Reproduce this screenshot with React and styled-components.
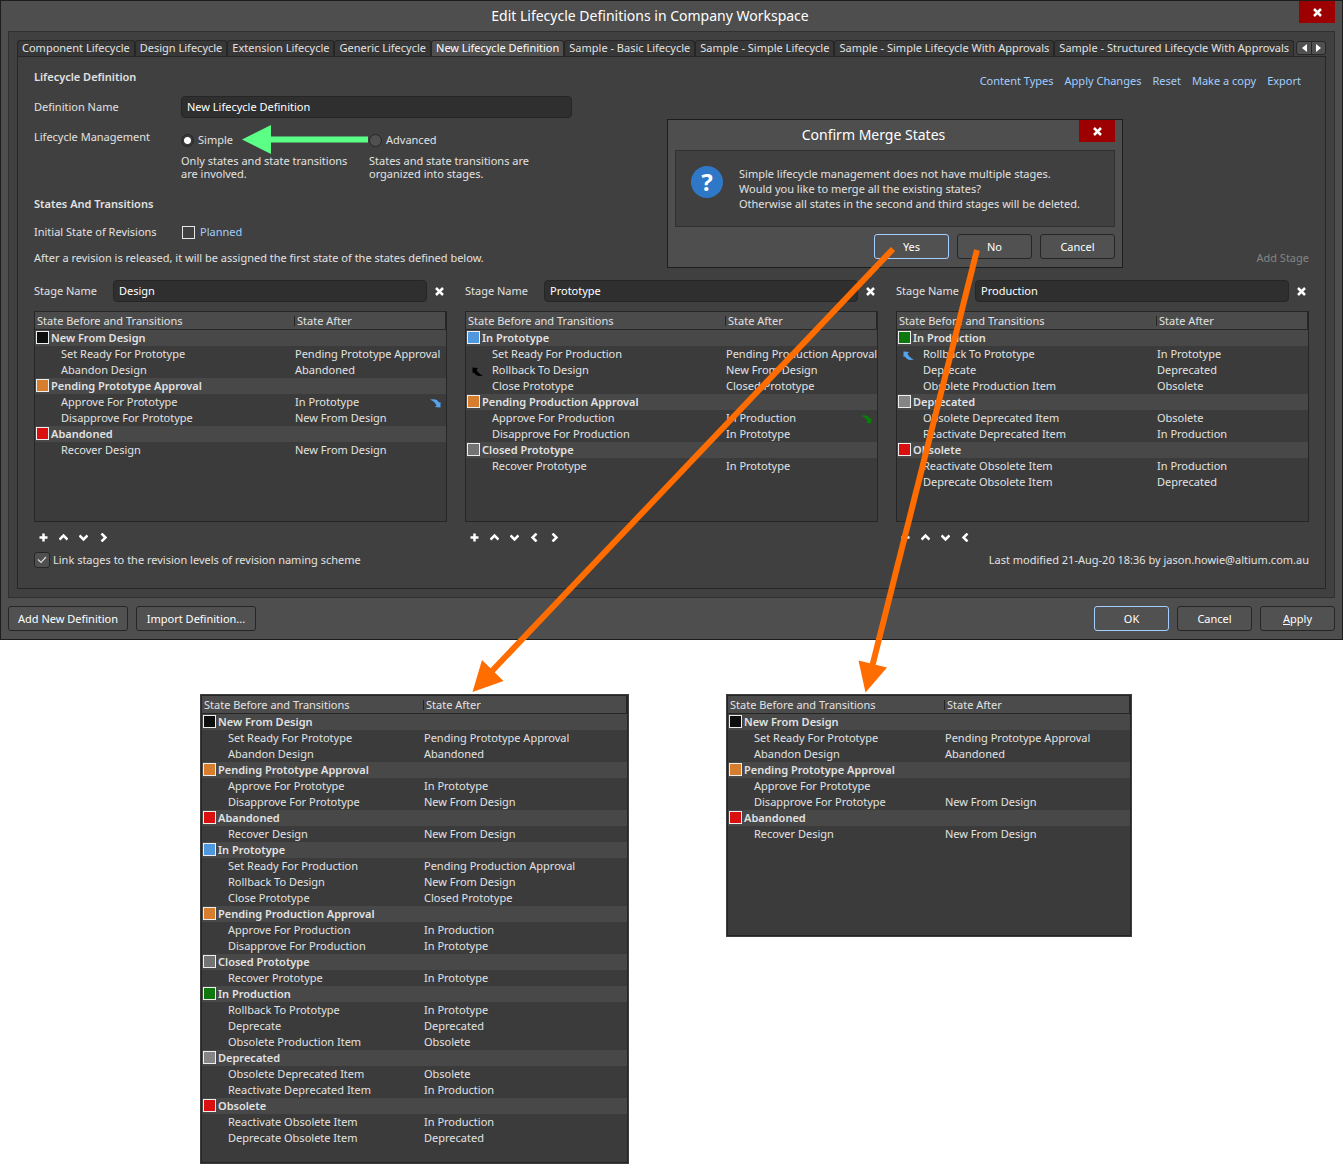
import React from "react";
import styled, { createGlobalStyle } from "styled-components";

const colors = {
  frame: "#1d1d1d",
  chrome: "#4e4e4e",
  panel: "#404040",
  line: "#262626",
  field: "#2f2f2f",
  list: "#3b3b3b",
  group: "#484848",
  text: "#e2e2e2",
  bright: "#ffffff",
  link: "#a3ceff",
  dim: "#848484",
  accent: "#ff6c00",
};

const swatches = {
  black: "#0d0f0e",
  orange: "#d67e2e",
  red: "#da0f10",
  blue: "#4f98e0",
  closed: "#737373",
  green: "#0e780e",
  gray: "#858585",
};

const GlobalStyle = createGlobalStyle`
  * {
    box-sizing: border-box;
  }
  body {
    margin: 0;
    background: #ffffff;
    color: ${colors.text};
    font: 11px/16px "Noto Sans", "Open Sans", sans-serif;
  }
  button, input {
    font: inherit;
    color: inherit;
    margin: 0;
  }
`;

const Page = styled.div`
  position: relative;
`;

const Window = styled.main`
  display: flex;
  flex-direction: column;
  padding: 0 7px 8px;
  border: 1px solid ${colors.frame};
  background: ${colors.chrome};
`;

const TitleBar = styled.header`
  display: grid;
  grid-template-columns: 1fr 36px;
  height: 30px;
  margin-left: -7px;
`;

const WindowTitle = styled.h1`
  margin: 0;
  font-size: 14px;
  line-height: 30px;
  font-weight: 400;
  text-align: center;
  color: ${colors.bright};
`;

const CloseButton = styled.button`
  display: grid;
  place-items: center;
  height: 22px;
  padding: 0;
  border: 0;
  background: #9c0000;
  color: ${colors.bright};
`;

const Panel = styled.div`
  padding: 8px;
  border: 1px solid #303030;
  background: ${colors.panel};
`;

const TabBar = styled.div`
  display: flex;
  height: 16px;
`;

const Tab = styled.button`
  flex: 1 1 auto;
  padding: 0 0 2px;
  border: 1px solid ${colors.line};
  border-bottom: 0;
  border-radius: 3px 3px 0 0;
  background: ${(props) => (props.$active ? "#505050" : "#373737")};
  color: ${(props) => (props.$active ? colors.bright : colors.text)};
  line-height: 13px;
  white-space: nowrap;
`;

const TabScroller = styled.div`
  display: flex;
  flex: none;
  margin: 1px 0 1px 2px;
  border: 1px solid ${colors.line};
  border-radius: 3px;
  background: #505050;
`;

const ScrollButton = styled.button`
  display: grid;
  place-items: center;
  width: 14px;
  padding: 0;
  border: 0;
  background: none;
  color: ${colors.bright};

  & + & {
    border-left: 1px solid ${colors.line};
  }
`;

const TabBody = styled.div`
  padding: 12px 16px 20px;
  border: 1px solid ${colors.line};
`;

const Section = styled.div`
  display: flex;
  justify-content: space-between;
`;

const Heading = styled.h2`
  margin: 0;
  font-size: 11px;
  font-weight: 600;
  line-height: 16px;
`;

const Actions = styled.nav`
  display: flex;
  gap: 11px;
  padding: 4px 8px 0 0;
`;

const ActionLink = styled.a`
  color: ${colors.link};
  text-decoration: none;
`;

const FormRow = styled.div`
  display: grid;
  grid-template-columns: 147px 1fr;
  align-items: ${(props) => (props.$top ? "start" : "center")};
`;

const Definition = styled.div`
  display: grid;
  gap: 11px;
  margin: 7px 0 16px;
`;

const Field = styled.input`
  width: 100%;
  max-width: ${(props) => props.$max || "none"};
  height: 22px;
  padding: 0 5px 2px;
  border: 1px solid ${colors.line};
  border-radius: 4px;
  background: ${colors.field};
  color: ${colors.bright};
`;

const Choices = styled.div`
  display: flex;
  gap: 10px;
  padding-top: 3px;
`;

const Choice = styled.div`
  width: 178px;
`;

const ChoiceLabel = styled.label`
  display: flex;
  align-items: center;
  gap: 4px;
`;

const Radio = styled.input`
  appearance: none;
  width: 13px;
  height: 13px;
  border: 1px solid ${colors.line};
  border-radius: 50%;
  background: #505050;

  &:checked {
    background: radial-gradient(circle, #fff 3px, #383838 4px);
  }
`;

const Hint = styled.p`
  margin: 6px 0 0;
  line-height: 13px;
`;

const Box = styled.input`
  appearance: none;
  width: 13px;
  height: 13px;
  border: 1px solid #e6e6e6;
  margin-left: 1px;
`;

const StateRow = styled(FormRow)`
  margin: 12px 0 10px;
`;

const PlannedLabel = styled.label`
  display: flex;
  align-items: center;
  gap: 5px;
  color: ${colors.link};
`;

const AddStage = styled.button`
  padding: 0;
  border: 0;
  background: none;

  &:disabled {
    color: ${colors.dim};
  }
`;

const Stages = styled.div`
  display: grid;
  grid-template-columns: repeat(3, 1fr);
  gap: 18px;
  margin-top: 14px;
`;

const StageName = styled.div`
  display: grid;
  grid-template-columns: 79px 1fr 20px;
  align-items: center;
  margin-bottom: 9px;
`;

const IconButton = styled.button`
  display: grid;
  place-items: center;
  width: 20px;
  height: 16px;
  padding: 0;
  border: 0;
  background: none;
  color: ${colors.bright};
`;

const RemoveButton = styled(IconButton)`
  justify-self: end;
  width: 15px;
`;

const StageTools = styled.div`
  display: flex;
  margin-top: 7px;
  /* the plus glyph lines up with the colour swatches above */
  margin-left: -1px;
`;

const ListFrame = styled.div`
  height: ${(props) => props.$height};
  overflow: hidden;
  border: 1px solid ${colors.line};
  background: ${colors.list};
`;

const List = styled.table`
  width: 100%;
  table-layout: fixed;
  border-collapse: separate;
  border-spacing: 0;
  white-space: nowrap;
`;

const HeadCell = styled.th`
  position: relative;
  width: ${(props) => props.$width || "auto"};
  height: 18px;
  padding: 0 2px;
  border-bottom: 1px solid ${colors.line};
  background: #4b4b4b;
  font-weight: 400;
  text-align: left;

  &:last-child {
    padding-left: 3px;
    border-right: 1px solid ${colors.line};
  }

  &:last-child::before {
    content: "";
    position: absolute;
    top: 4px;
    left: 0;
    height: 10px;
    border-left: 1px solid ${colors.line};
  }
`;

const GroupCell = styled.td`
  height: 16px;
  padding: 0 1px;
  background: ${colors.group};
  font-weight: 600;
`;

const GroupName = styled.span`
  display: flex;
  gap: 2px;
`;

const Swatch = styled.span`
  width: 13px;
  height: 13px;
  margin-top: 1px;
  border: 1px solid #eee;
  background: ${(props) => props.$color};
`;

const Cell = styled.td`
  position: relative;
  height: 16px;
  padding: 0 0 0 ${(props) => (props.$indent ? "26px" : "1px")};
`;

const Marker = styled.svg`
  position: absolute;
  top: 5px;
  ${(props) => (props.$back ? "left: 6px; transform: rotate(180deg);" : "right: 5px;")}
`;

const StatusRow = styled.div`
  display: flex;
  justify-content: space-between;
  margin-top: 7px;
`;

const LinkLabel = styled.label`
  display: flex;
  align-items: center;
  gap: 3px;
`;

const CheckWrap = styled.span`
  display: grid;
  width: 16px;
  height: 16px;

  & > * {
    grid-area: 1 / 1;
    place-self: center;
    pointer-events: none;
  }
`;

const LinkCheck = styled.input`
  appearance: none;
  width: 16px;
  height: 16px;
  border: 1px solid ${colors.line};
  border-radius: 3px;
  background: #505050;
`;

const Footer = styled.footer`
  display: flex;
  gap: 8px;
  margin-top: 8px;
`;

const PushButton = styled.button`
  width: ${(props) => (props.$wide ? "120px" : "75px")};
  height: 25px;
  padding: 0;
  border: 1px solid ${(props) => (props.$primary ? colors.link : colors.line)};
  border-radius: 3px;
  background: #515151;
  color: ${colors.bright};
`;

const Spacer = styled.span`
  flex: 1;
`;

const Dialog = styled.section`
  position: absolute;
  top: 119px;
  left: 667px;
  width: 456px;
  padding: 0 7px 8px;
  border: 1px solid ${colors.frame};
  background: ${colors.chrome};
`;

const Message = styled.div`
  display: flex;
  gap: 16px;
  padding: 15px;
  border: 1px solid #303030;
  background: ${colors.panel};
`;

const MessageText = styled.p`
  margin: 0;
  line-height: 15px;
`;

const QuestionMark = styled.span`
  width: 32px;
  height: 32px;
  border-radius: 50%;
  background: #2f78c8;
  color: ${colors.bright};
  font-size: 24px;
  font-weight: 700;
  line-height: 32px;
  text-align: center;
`;

const DialogButtons = styled.div`
  display: flex;
  justify-content: flex-end;
  gap: 8px;
  margin-top: 7px;
`;

const Results = styled.div`
  display: flex;
  align-items: flex-start;
  gap: 97px;
  padding: 54px 0 0 200px;
`;

const Result = styled.div`
  width: ${(props) => props.$width};
  border: 1px solid #3e3e3e;
`;

const Callouts = styled.svg`
  position: absolute;
  top: 0;
  left: 0;
  pointer-events: none;
`;

const tabs = [
  "Component Lifecycle",
  "Design Lifecycle",
  "Extension Lifecycle",
  "Generic Lifecycle",
  "New Lifecycle Definition",
  "Sample - Basic Lifecycle",
  "Sample - Simple Lifecycle",
  "Sample - Simple Lifecycle With Approvals",
  "Sample - Structured Lifecycle With Approvals",
];

const actions = ["Content Types", "Apply Changes", "Reset", "Make a copy", "Export"];

const design = [
  { name: "New From Design", color: "black", rows: [
    ["Set Ready For Prototype", "Pending Prototype Approval"],
    ["Abandon Design", "Abandoned"],
  ] },
  { name: "Pending Prototype Approval", color: "orange", rows: [
    ["Approve For Prototype", "In Prototype", { next: "#55a4f2" }],
    ["Disapprove For Prototype", "New From Design"],
  ] },
  { name: "Abandoned", color: "red", rows: [
    ["Recover Design", "New From Design"],
  ] },
];

const prototype = [
  { name: "In Prototype", color: "blue", rows: [
    ["Set Ready For Production", "Pending Production Approval"],
    ["Rollback To Design", "New From Design", { back: "#000000" }],
    ["Close Prototype", "Closed Prototype"],
  ] },
  { name: "Pending Production Approval", color: "orange", rows: [
    ["Approve For Production", "In Production", { next: "#0b7d0b" }],
    ["Disapprove For Production", "In Prototype"],
  ] },
  { name: "Closed Prototype", color: "closed", rows: [
    ["Recover Prototype", "In Prototype"],
  ] },
];

const production = [
  { name: "In Production", color: "green", rows: [
    ["Rollback To Prototype", "In Prototype", { back: "#55a4f2" }],
    ["Deprecate", "Deprecated"],
    ["Obsolete Production Item", "Obsolete"],
  ] },
  { name: "Deprecated", color: "gray", rows: [
    ["Obsolete Deprecated Item", "Obsolete"],
    ["Reactivate Deprecated Item", "In Production"],
  ] },
  { name: "Obsolete", color: "red", rows: [
    ["Reactivate Obsolete Item", "In Production"],
    ["Deprecate Obsolete Item", "Deprecated"],
  ] },
];

const stages = [
  { name: "Design", groups: design, tools: ["plus", "up", "down", "right"] },
  { name: "Prototype", groups: prototype, tools: ["plus", "up", "down", "left", "right"] },
  { name: "Production", groups: production, tools: ["plus", "up", "down", "left"] },
];

// Merging keeps every state, declining drops the links to the removed stages.
const merged = [...design, ...prototype, ...production];
const trimmed = design.map((group) => ({
  ...group,
  rows: group.rows.map(([name, after]) => [name, after === "In Prototype" ? "" : after]),
}));

const iconPaths = {
  close: "M1 1l7 7M8 1l-7 7",
  plus: "M4.5 0.5v8M0.5 4.5h8",
  up: "M0.5 6.5l4-4 4 4",
  down: "M0.5 2.5l4 4 4-4",
  left: "M6.5 0.5l-4 4 4 4",
  right: "M2.5 0.5l4 4-4 4",
};

const Icon = ({ name }) => (
  <svg width="9" height="9" viewBox="0 0 9 9" fill="none" stroke="currentColor" strokeWidth="2.5">
    <path d={iconPaths[name]} />
  </svg>
);

const TransitionArrow = ({ color, back }) => (
  <Marker $back={back} width="11" height="9" viewBox="0 0 11 9" fill={color}>
    <path d="M0 0.500Q7-1 9 3.500L10.500 3V8.500L5 8L6.500 6.500Q5 2.500 0 0.500z" />
  </Marker>
);

const StateList = ({ groups, split, height, markers }) => (
  <ListFrame $height={height}>
    <List>
      <thead>
        <tr>
          <HeadCell $width={split}>State Before and Transitions</HeadCell>
          <HeadCell>State After</HeadCell>
        </tr>
      </thead>
      <tbody>
        {groups.map((group) => (
          <React.Fragment key={group.name}>
            <tr>
              <GroupCell colSpan={2}>
                <GroupName>
                  <Swatch $color={swatches[group.color]} />
                  {group.name}
                </GroupName>
              </GroupCell>
            </tr>
            {group.rows.map(([name, after, marker = {}]) => (
              <tr key={name}>
                <Cell $indent>
                  {markers && marker.back && <TransitionArrow back color={marker.back} />}
                  {name}
                </Cell>
                <Cell>
                  {after}
                  {markers && marker.next && <TransitionArrow color={marker.next} />}
                </Cell>
              </tr>
            ))}
          </React.Fragment>
        ))}
      </tbody>
    </List>
  </ListFrame>
);

const Stage = ({ name, groups, tools }) => {
  const id = `stage-${name.toLowerCase()}`;
  return (
    <section>
      <StageName>
        <label htmlFor={id}>Stage Name</label>
        <Field id={id} defaultValue={name} />
        <RemoveButton aria-label={`Remove ${name}`}>
          <Icon name="close" />
        </RemoveButton>
      </StageName>
      <StateList groups={groups} split="259px" height="211px" markers />
      <StageTools>
        {tools.map((tool) => (
          <IconButton key={tool} aria-label={tool}>
            <Icon name={tool} />
          </IconButton>
        ))}
      </StageTools>
    </section>
  );
};

const ConfirmDialog = () => (
  <Dialog role="dialog" aria-labelledby="confirm-title">
    <TitleBar>
      <WindowTitle as="h2" id="confirm-title">Confirm Merge States</WindowTitle>
      <CloseButton aria-label="Close dialog">
        <Icon name="close" />
      </CloseButton>
    </TitleBar>
    <Message>
      <QuestionMark>?</QuestionMark>
      <MessageText>
        Simple lifecycle management does not have multiple stages.<br />
        Would you like to merge all the existing states?<br />
        Otherwise all states in the second and third stages will be deleted.
      </MessageText>
    </Message>
    <DialogButtons>
      <PushButton $primary>Yes</PushButton>
      <PushButton>No</PushButton>
      <PushButton>Cancel</PushButton>
    </DialogButtons>
  </Dialog>
);

const App = () => (
  <Page>
    <GlobalStyle />
    <Window>
      <TitleBar>
        <WindowTitle>Edit Lifecycle Definitions in Company Workspace</WindowTitle>
        <CloseButton aria-label="Close">
          <Icon name="close" />
        </CloseButton>
      </TitleBar>
      <Panel>
        <TabBar role="tablist">
          {tabs.map((tab) => (
            <Tab key={tab} role="tab" $active={tab === "New Lifecycle Definition"}>{tab}</Tab>
          ))}
          <TabScroller>
            <ScrollButton aria-label="Previous tabs">
              <svg width="5" height="8" fill="currentColor"><path d="M5 0v8L0 4z" /></svg>
            </ScrollButton>
            <ScrollButton aria-label="Next tabs">
              <svg width="5" height="8" fill="currentColor"><path d="M0 0v8l5-4z" /></svg>
            </ScrollButton>
          </TabScroller>
        </TabBar>
        <TabBody>
          <Section>
            <Heading>Lifecycle Definition</Heading>
            <Actions>
              {actions.map((action) => (
                <ActionLink key={action} href="#">{action}</ActionLink>
              ))}
            </Actions>
          </Section>
          <Definition>
            <FormRow>
              <label htmlFor="definition-name">Definition Name</label>
              <Field id="definition-name" $max="391px" defaultValue="New Lifecycle Definition" />
            </FormRow>
            <FormRow $top>
              <span>Lifecycle Management</span>
              <Choices>
                <Choice>
                  <ChoiceLabel>
                    <Radio type="radio" name="management" defaultChecked />
                    Simple
                  </ChoiceLabel>
                  <Hint>Only states and state transitions<br />are involved.</Hint>
                </Choice>
                <Choice>
                  <ChoiceLabel>
                    <Radio type="radio" name="management" />
                    Advanced
                  </ChoiceLabel>
                  <Hint>States and state transitions are<br />organized into stages.</Hint>
                </Choice>
              </Choices>
            </FormRow>
          </Definition>
          <Heading>States And Transitions</Heading>
          <StateRow>
            <span>Initial State of Revisions</span>
            <PlannedLabel>
              <Box type="checkbox" />
              Planned
            </PlannedLabel>
          </StateRow>
          <Section>
            <span>After a revision is released, it will be assigned the first state of the states defined below.</span>
            <AddStage disabled>Add Stage</AddStage>
          </Section>
          <Stages>
            {stages.map((stage) => (
              <Stage key={stage.name} {...stage} />
            ))}
          </Stages>
          <StatusRow>
            <LinkLabel>
              <CheckWrap>
                <LinkCheck type="checkbox" defaultChecked />
                <svg width="10" height="8" fill="none" stroke="#ddd" strokeWidth="1.2">
                  <path d="M1 3.500l3 3L9 1" />
                </svg>
              </CheckWrap>
              Link stages to the revision levels of revision naming scheme
            </LinkLabel>
            <span>Last modified 21-Aug-20 18:36 by jason.howie@altium.com.au</span>
          </StatusRow>
        </TabBody>
      </Panel>
      <Footer>
        <PushButton $wide>Add New Definition</PushButton>
        <PushButton $wide>Import Definition...</PushButton>
        <Spacer />
        <PushButton $primary>OK</PushButton>
        <PushButton>Cancel</PushButton>
        <PushButton><u>A</u>pply</PushButton>
      </Footer>
    </Window>
    <ConfirmDialog />
    <Results>
      <Result $width="429px">
        <StateList groups={merged} split="221px" height="468px" />
      </Result>
      <Result $width="406px">
        <StateList groups={trimmed} split="216px" height="241px" />
      </Result>
    </Results>
    <Callouts width="1000" height="700" fill={colors.accent} stroke={colors.accent}>
      <g stroke="none">
        <path d="M472.500 692l9.500-32 21.500 21z" />
        <path d="M865.500 692.500l-7-32 28.500 7z" />
        <path d="M242 139.500l29-14.500v29z" fill="#5cff85" />
      </g>
      <g strokeWidth="6">
        <path d="M893 249L491 672" />
        <path d="M977 250L872 667" />
        <path d="M368 139.500h-98" stroke="#5cff85" />
      </g>
    </Callouts>
  </Page>
);

export default App;
